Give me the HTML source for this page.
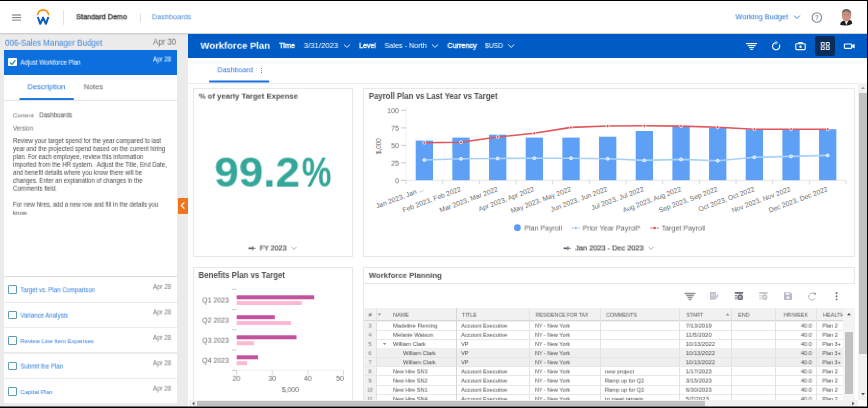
<!DOCTYPE html>
<html><head><meta charset="utf-8"><title>Workforce Plan</title>
<style>
html,body{margin:0;padding:0;}
body{width:868px;height:408px;position:relative;overflow:hidden;background:#fff;font-family:"Liberation Sans",sans-serif;}
div,span,svg{box-sizing:border-box;}
svg{position:absolute;overflow:visible;}
</style></head><body>
<div style="position:absolute;left:0.00px;top:0.00px;width:868.00px;height:408.00px;background:#fff;"></div>
<div style="position:absolute;left:0;top:33px;width:868px;height:3px;background:linear-gradient(#c9c9c9,#e4e4e4 60%,#ebebeb);"></div>
<div style="position:absolute;left:0.00px;top:35.00px;width:188.00px;height:373.00px;background:#ebebeb;"></div>
<svg style="left:0;top:0" width="868" height="408" viewBox="0 0 868 408"><path d="M12.1 15 H21 M12.1 20.1 H21" stroke="#979da5" stroke-width="1.4"/><path d="M12.1 17.55 H21" stroke="#7e848c" stroke-width="1.1"/></svg>
<div style="position:absolute;left:63.30px;top:9.50px;width:1.00px;height:15.50px;background:#e2e2e2;"></div>
<div style="position:absolute;left:139.60px;top:13.50px;width:1.00px;height:8.00px;background:#dcdcdc;"></div>
<svg style="left:0;top:0" width="868" height="408" viewBox="0 0 868 408"><path d="M37.6 14.6 A5.6 5.6 0 0 1 48.6 14.6" fill="none" stroke="#f38b00" stroke-width="1.5" stroke-linecap="round"/><path d="M37.8 17 L40.3 23.8 L43.1 17.6 L45.9 23.8 L48.4 17" fill="none" stroke="#0b5cbf" stroke-width="2" stroke-linejoin="round" stroke-linecap="butt"/></svg>
<svg style="left:0;top:0" width="868" height="408" viewBox="0 0 868 408"><path d="M794 15.6 L796.9 18.5 L799.8 15.6" fill="none" stroke="#3b82d9" stroke-width="1"/><circle cx="816.9" cy="17.5" r="4.7" fill="none" stroke="#7b8794" stroke-width="1.1"/></svg>
<svg style="left:0;top:0" width="868" height="408" viewBox="0 0 868 408"><path d="M839.9 24.6 Q840.6 21.6 843.6 20.6 L846.3 22 L849.8 19.8 Q852.4 21 852.3 23.4 Q849.5 25.8 846 25.5 Q842.5 25.8 839.9 24.6 Z" fill="#1e1e22"/><path d="M845 21.2 L846.3 25.2 L848.2 20.8 Z" fill="#f4f4f4"/><ellipse cx="846.5" cy="15.4" rx="4.7" ry="6.2" fill="#c9917f"/><ellipse cx="846.3" cy="18.6" rx="2.6" ry="1.6" fill="#d29a8c"/><ellipse cx="844.8" cy="14.7" rx="0.9" ry="0.45" fill="#5a4038" opacity="0.55"/><ellipse cx="848.3" cy="14.7" rx="0.9" ry="0.45" fill="#5a4038" opacity="0.55"/><path d="M845.2 18.7 Q846.6 19.4 848 18.7" stroke="#a3605a" stroke-width="0.5" fill="none"/><path d="M841.9 14 Q841.6 9 846.6 8.9 Q851.6 9.2 851.3 15 Q850.6 11.6 846.6 11.2 Q843 11.3 841.9 14 Z" fill="#6e6660"/></svg>
<div style="position:absolute;left:3.80px;top:50.20px;width:173.40px;height:24.40px;background:#0b70de;"></div>
<div style="position:absolute;left:8.20px;top:58.20px;width:8.80px;height:8.10px;background:#fff;border-radius:1px;"></div>
<svg style="left:0;top:0" width="868" height="408" viewBox="0 0 868 408"><path d="M10 62.3 L12 64.4 L15.4 60.2" fill="none" stroke="#1f86a8" stroke-width="1.2"/></svg>
<div style="position:absolute;left:3.80px;top:74.60px;width:173.40px;height:201.60px;background:#fff;box-shadow:0 0.5px 1px rgba(0,0,0,0.08);"></div>
<div style="position:absolute;left:3.80px;top:100.00px;width:173.40px;height:0.80px;background:#e6e6e6;"></div>
<div style="position:absolute;left:178.00px;top:197.60px;width:9.50px;height:16.00px;background:#f0741c;border-radius:0.8px;"></div>
<svg style="left:0;top:0" width="868" height="408" viewBox="0 0 868 408"><path d="M184.4 202.4 L181.3 205.5 L184.4 208.6" fill="none" stroke="#fff" stroke-width="1.15"/></svg>
<div style="position:absolute;left:3.80px;top:277.20px;width:173.40px;height:24.40px;background:#fff;"></div>
<div style="position:absolute;left:8.2px;top:285.30px;width:8.8px;height:8.6px;border:1px solid #5d9cb8;border-radius:1px;background:#fff"></div>
<div style="position:absolute;left:3.80px;top:302.65px;width:173.40px;height:24.40px;background:#fff;"></div>
<div style="position:absolute;left:8.2px;top:310.75px;width:8.8px;height:8.6px;border:1px solid #5d9cb8;border-radius:1px;background:#fff"></div>
<div style="position:absolute;left:3.80px;top:328.10px;width:173.40px;height:24.40px;background:#fff;"></div>
<div style="position:absolute;left:8.2px;top:336.20px;width:8.8px;height:8.6px;border:1px solid #5d9cb8;border-radius:1px;background:#fff"></div>
<div style="position:absolute;left:3.80px;top:353.55px;width:173.40px;height:24.40px;background:#fff;"></div>
<div style="position:absolute;left:8.2px;top:361.65px;width:8.8px;height:8.6px;border:1px solid #5d9cb8;border-radius:1px;background:#fff"></div>
<div style="position:absolute;left:3.80px;top:379.00px;width:173.40px;height:24.40px;background:#fff;"></div>
<div style="position:absolute;left:8.2px;top:387.10px;width:8.8px;height:8.6px;border:1px solid #5d9cb8;border-radius:1px;background:#fff"></div>
<div style="position:absolute;left:188.00px;top:33.80px;width:679.00px;height:23.80px;background:#005cc5;"></div>
<svg style="left:0;top:0" width="868" height="408" viewBox="0 0 868 408"><path d="M343.9 44.5 L346.9 47.4 L349.9 44.5" fill="none" stroke="#fff" stroke-width="0.9"/><path d="M432.0 44.5 L435.0 47.4 L438.0 44.5" fill="none" stroke="#fff" stroke-width="0.9"/><path d="M508.2 44.5 L511.2 47.4 L514.2 44.5" fill="none" stroke="#fff" stroke-width="0.9"/></svg>
<div style="position:absolute;left:815.20px;top:35.90px;width:19.60px;height:19.80px;background:#0b2d5c;border-radius:2px;"></div>
<svg style="left:0;top:0" width="868" height="408" viewBox="0 0 868 408"><g fill="none" stroke="#fff" stroke-width="1.1"><path d="M746.10 43.60 H757.10"/><path d="M747.60 45.60 H755.60"/><path d="M749.10 47.60 H754.10"/><path d="M750.40 49.50 H752.80"/><path d="M776.1 42.6 A3.6 3.6 0 1 0 779.3 44.5" /><path d="M775.6 41 L777.6 42.7 L775.6 44.4" stroke-width="0.8"/><rect x="795.8" y="43.8" width="9.4" height="5.8" rx="0.8"/><path d="M798.4 43.6 L799 42.6 H802 L802.6 43.6"/><circle cx="800.5" cy="46.8" r="1.2" fill="#fff" stroke="none"/><rect x="821.2" y="42.6" width="3" height="2.6" stroke-width="0.9"/><rect x="821.2" y="46.9" width="3" height="2.6" stroke-width="0.9"/><rect x="826.2" y="42.6" width="3" height="2.6" stroke-width="0.9"/><rect x="826.2" y="46.9" width="3" height="2.6" stroke-width="0.9"/><rect x="844.4" y="44" width="7.2" height="4.4" rx="0.6"/><path d="M851.8 45.6 L854.4 44.3 V48.1 L851.8 46.8" fill="#fff" stroke-width="0.5"/></g></svg>
<div style="position:absolute;left:260.80px;top:67.60px;width:1.10px;height:1.10px;background:#2274dc;border-radius:1px;"></div>
<div style="position:absolute;left:260.80px;top:69.80px;width:1.10px;height:1.10px;background:#2274dc;border-radius:1px;"></div>
<div style="position:absolute;left:260.80px;top:72.00px;width:1.10px;height:1.10px;background:#2274dc;border-radius:1px;"></div>
<svg style="left:0;top:0" width="868" height="408" viewBox="0 0 868 408"><rect x="209.2" y="80.5" width="60" height="2" fill="#1673e0"/><rect x="19.5" y="98.1" width="54.3" height="1.9" fill="#1673e0"/></svg>
<div style="position:absolute;left:188.00px;top:82.60px;width:670.30px;height:0.80px;background:#ececec;"></div>
<div style="position:absolute;left:192.80px;top:88.00px;width:160.20px;height:168.80px;border:1px solid #e5e8ed;background:#fff"></div>
<div style="position:absolute;left:363.00px;top:88.00px;width:492.00px;height:168.80px;border:1px solid #e5e8ed;background:#fff"></div>
<div style="position:absolute;left:192.80px;top:267.20px;width:160.20px;height:142.80px;border:1px solid #e5e8ed;background:#fff"></div>
<div style="position:absolute;left:363.00px;top:267.20px;width:492.00px;height:16.60px;border:1px solid #e5e8ed;background:#fff"></div>
<div style="position:absolute;left:363.00px;top:283.00px;width:1.00px;height:117.40px;background:#e5e8ed;"></div>
<svg style="left:0;top:0" width="868" height="408" viewBox="0 0 868 408"><g fill="none" stroke="#667" stroke-width="0.8"><path d="M248.5 248.3 H252.1" stroke-width="1.7" stroke="#5a6270"/><path d="M252.8 246.3 V250.3" stroke-width="1.1" stroke="#5a6270"/><path d="M252.8 248.3 H255.7" stroke-width="0.8" stroke="#5a6270"/><path d="M563.6 248.3 H567.2" stroke-width="1.7" stroke="#5a6270"/><path d="M567.9 246.3 V250.3" stroke-width="1.1" stroke="#5a6270"/><path d="M567.9 248.3 H570.8" stroke-width="0.8" stroke="#5a6270"/><path d="M291.6 247 L294.0 249.4 L296.4 247" stroke="#8a94a0"/><path d="M648.6 247 L651.0 249.4 L653.4 247" stroke="#8a94a0"/></g></svg>
<svg style="left:0;top:0" width="868" height="408" viewBox="0 0 868 408"><g><path d="M406 107 V180.4" fill="none" stroke="#eeeeee" stroke-width="0.8"/><path d="M406 180.4 H846" fill="none" stroke="#e3e3e3" stroke-width="0.8"/><path d="M401 180.40 H406" stroke="#bdbdbd" stroke-width="0.8"/><path d="M401 162.90 H406" stroke="#bdbdbd" stroke-width="0.8"/><path d="M401 145.40 H406" stroke="#bdbdbd" stroke-width="0.8"/><path d="M401 127.90 H406" stroke="#bdbdbd" stroke-width="0.8"/><path d="M401 110.40 H406" stroke="#bdbdbd" stroke-width="0.8"/><path d="M406.00 180.4 V184.4" stroke="#cfcfcf" stroke-width="0.8"/><path d="M442.67 180.4 V184.4" stroke="#cfcfcf" stroke-width="0.8"/><path d="M479.34 180.4 V184.4" stroke="#cfcfcf" stroke-width="0.8"/><path d="M516.01 180.4 V184.4" stroke="#cfcfcf" stroke-width="0.8"/><path d="M552.68 180.4 V184.4" stroke="#cfcfcf" stroke-width="0.8"/><path d="M589.35 180.4 V184.4" stroke="#cfcfcf" stroke-width="0.8"/><path d="M626.02 180.4 V184.4" stroke="#cfcfcf" stroke-width="0.8"/><path d="M662.69 180.4 V184.4" stroke="#cfcfcf" stroke-width="0.8"/><path d="M699.36 180.4 V184.4" stroke="#cfcfcf" stroke-width="0.8"/><path d="M736.03 180.4 V184.4" stroke="#cfcfcf" stroke-width="0.8"/><path d="M772.70 180.4 V184.4" stroke="#cfcfcf" stroke-width="0.8"/><path d="M809.37 180.4 V184.4" stroke="#cfcfcf" stroke-width="0.8"/><path d="M846.04 180.4 V184.4" stroke="#cfcfcf" stroke-width="0.8"/><rect x="415.69" y="140.60" width="17.3" height="39.60" fill="#5da0f6"/><rect x="452.36" y="137.60" width="17.3" height="42.60" fill="#5da0f6"/><rect x="489.03" y="134.70" width="17.3" height="45.50" fill="#5da0f6"/><rect x="525.70" y="137.60" width="17.3" height="42.60" fill="#5da0f6"/><rect x="562.37" y="137.60" width="17.3" height="42.60" fill="#5da0f6"/><rect x="599.03" y="136.70" width="17.3" height="43.50" fill="#5da0f6"/><rect x="635.71" y="131.00" width="17.3" height="49.20" fill="#5da0f6"/><rect x="672.38" y="126.40" width="17.3" height="53.80" fill="#5da0f6"/><rect x="709.04" y="127.70" width="17.3" height="52.50" fill="#5da0f6"/><rect x="745.72" y="129.50" width="17.3" height="50.70" fill="#5da0f6"/><rect x="782.39" y="129.50" width="17.3" height="50.70" fill="#5da0f6"/><rect x="819.06" y="129.20" width="17.3" height="51.00" fill="#5da0f6"/><polyline points="424.33,160.00 461.00,158.80 497.68,158.50 534.35,158.20 571.01,158.20 607.68,158.80 644.36,160.40 681.03,159.40 717.69,160.70 754.37,157.30 791.04,156.40 827.71,155.40" fill="none" stroke="#a9d0fb" stroke-width="1.6"/><circle cx="424.33" cy="160.00" r="1.5" fill="#b9d8fd" stroke="#fff" stroke-width="0.8"/><circle cx="461.00" cy="158.80" r="1.5" fill="#b9d8fd" stroke="#fff" stroke-width="0.8"/><circle cx="497.68" cy="158.50" r="1.5" fill="#b9d8fd" stroke="#fff" stroke-width="0.8"/><circle cx="534.35" cy="158.20" r="1.5" fill="#b9d8fd" stroke="#fff" stroke-width="0.8"/><circle cx="571.01" cy="158.20" r="1.5" fill="#b9d8fd" stroke="#fff" stroke-width="0.8"/><circle cx="607.68" cy="158.80" r="1.5" fill="#b9d8fd" stroke="#fff" stroke-width="0.8"/><circle cx="644.36" cy="160.40" r="1.5" fill="#b9d8fd" stroke="#fff" stroke-width="0.8"/><circle cx="681.03" cy="159.40" r="1.5" fill="#b9d8fd" stroke="#fff" stroke-width="0.8"/><circle cx="717.69" cy="160.70" r="1.5" fill="#b9d8fd" stroke="#fff" stroke-width="0.8"/><circle cx="754.37" cy="157.30" r="1.5" fill="#b9d8fd" stroke="#fff" stroke-width="0.8"/><circle cx="791.04" cy="156.40" r="1.5" fill="#b9d8fd" stroke="#fff" stroke-width="0.8"/><circle cx="827.71" cy="155.40" r="1.5" fill="#b9d8fd" stroke="#fff" stroke-width="0.8"/><polyline points="424.33,142.70 461.00,142.20 497.68,137.00 534.35,133.20 571.01,127.40 607.68,126.00 644.36,125.80 681.03,126.10 717.69,127.30 754.37,129.20 791.04,129.20 827.71,129.20" fill="none" stroke="#e0555a" stroke-width="1.6" stroke-linejoin="round"/><circle cx="424.33" cy="142.70" r="1.5" fill="#e04a50" stroke="#fff" stroke-width="0.75"/><circle cx="461.00" cy="142.20" r="1.5" fill="#e04a50" stroke="#fff" stroke-width="0.75"/><circle cx="497.68" cy="137.00" r="1.5" fill="#e04a50" stroke="#fff" stroke-width="0.75"/><circle cx="534.35" cy="133.20" r="1.5" fill="#e04a50" stroke="#fff" stroke-width="0.75"/><circle cx="571.01" cy="127.40" r="1.5" fill="#e04a50" stroke="#fff" stroke-width="0.75"/><circle cx="607.68" cy="126.00" r="1.5" fill="#e04a50" stroke="#fff" stroke-width="0.75"/><circle cx="644.36" cy="125.80" r="1.5" fill="#e04a50" stroke="#fff" stroke-width="0.75"/><circle cx="681.03" cy="126.10" r="1.5" fill="#e04a50" stroke="#fff" stroke-width="0.75"/><circle cx="717.69" cy="127.30" r="1.5" fill="#e04a50" stroke="#fff" stroke-width="0.75"/><circle cx="754.37" cy="129.20" r="1.5" fill="#e04a50" stroke="#fff" stroke-width="0.75"/><circle cx="791.04" cy="129.20" r="1.5" fill="#e04a50" stroke="#fff" stroke-width="0.75"/><circle cx="827.71" cy="129.20" r="1.5" fill="#e04a50" stroke="#fff" stroke-width="0.75"/><circle cx="517.4" cy="227.7" r="3.4" fill="#5b9df5"/><path d="M571.8 228 H579.8" stroke="#8fc2fb" stroke-width="0.9" stroke-dasharray="2.2 0.8"/><circle cx="575.8" cy="228" r="1.2" fill="#8fc2fb"/><path d="M650.3 228 H659" stroke="#e2555b" stroke-width="0.9" stroke-dasharray="2.4 0.8"/><circle cx="654.6" cy="228" r="1.25" fill="#e2555b"/></g></svg>
<span style="position:absolute;left:379px;top:145.5px;width:0;height:0;"><span style="position:absolute;transform:translate(-50%,-50%) rotate(-90deg);font-size:6.3px;color:#666;white-space:nowrap;line-height:8px;">$,000</span></span>
<span style="position:absolute;left:424.03px;top:188.40px;width:0;height:0;"><span style="position:absolute;right:0;top:-3.8px;transform-origin:100% 50%;transform:rotate(-20.5deg);font-size:6.85px;color:#6e6e6e;white-space:nowrap;line-height:8px;">Jan 2023, Jan ...</span></span>
<span style="position:absolute;left:460.70px;top:188.40px;width:0;height:0;"><span style="position:absolute;right:0;top:-3.8px;transform-origin:100% 50%;transform:rotate(-20.5deg);font-size:6.85px;color:#6e6e6e;white-space:nowrap;line-height:8px;">Feb 2023, Feb 2022</span></span>
<span style="position:absolute;left:497.38px;top:188.40px;width:0;height:0;"><span style="position:absolute;right:0;top:-3.8px;transform-origin:100% 50%;transform:rotate(-20.5deg);font-size:6.85px;color:#6e6e6e;white-space:nowrap;line-height:8px;">Mar 2023, Mar 2022</span></span>
<span style="position:absolute;left:534.05px;top:188.40px;width:0;height:0;"><span style="position:absolute;right:0;top:-3.8px;transform-origin:100% 50%;transform:rotate(-20.5deg);font-size:6.85px;color:#6e6e6e;white-space:nowrap;line-height:8px;">Apr 2023, Apr 2022</span></span>
<span style="position:absolute;left:570.72px;top:188.40px;width:0;height:0;"><span style="position:absolute;right:0;top:-3.8px;transform-origin:100% 50%;transform:rotate(-20.5deg);font-size:6.85px;color:#6e6e6e;white-space:nowrap;line-height:8px;">May 2023, May 2022</span></span>
<span style="position:absolute;left:607.38px;top:188.40px;width:0;height:0;"><span style="position:absolute;right:0;top:-3.8px;transform-origin:100% 50%;transform:rotate(-20.5deg);font-size:6.85px;color:#6e6e6e;white-space:nowrap;line-height:8px;">Jun 2023, Jun 2022</span></span>
<span style="position:absolute;left:644.06px;top:188.40px;width:0;height:0;"><span style="position:absolute;right:0;top:-3.8px;transform-origin:100% 50%;transform:rotate(-20.5deg);font-size:6.85px;color:#6e6e6e;white-space:nowrap;line-height:8px;">Jul 2023, Jul 2022</span></span>
<span style="position:absolute;left:680.73px;top:188.40px;width:0;height:0;"><span style="position:absolute;right:0;top:-3.8px;transform-origin:100% 50%;transform:rotate(-20.5deg);font-size:6.85px;color:#6e6e6e;white-space:nowrap;line-height:8px;">Aug 2023, Aug 2022</span></span>
<span style="position:absolute;left:717.39px;top:188.40px;width:0;height:0;"><span style="position:absolute;right:0;top:-3.8px;transform-origin:100% 50%;transform:rotate(-20.5deg);font-size:6.85px;color:#6e6e6e;white-space:nowrap;line-height:8px;">Sep 2023, Sep 2022</span></span>
<span style="position:absolute;left:754.07px;top:188.40px;width:0;height:0;"><span style="position:absolute;right:0;top:-3.8px;transform-origin:100% 50%;transform:rotate(-20.5deg);font-size:6.85px;color:#6e6e6e;white-space:nowrap;line-height:8px;">Oct 2023, Oct 2022</span></span>
<span style="position:absolute;left:790.74px;top:188.40px;width:0;height:0;"><span style="position:absolute;right:0;top:-3.8px;transform-origin:100% 50%;transform:rotate(-20.5deg);font-size:6.85px;color:#6e6e6e;white-space:nowrap;line-height:8px;">Nov 2023, Nov 2022</span></span>
<span style="position:absolute;left:827.41px;top:188.40px;width:0;height:0;"><span style="position:absolute;right:0;top:-3.8px;transform-origin:100% 50%;transform:rotate(-20.5deg);font-size:6.85px;color:#6e6e6e;white-space:nowrap;line-height:8px;">Dec 2023, Dec 2022</span></span>
<svg style="left:0;top:0" width="868" height="408" viewBox="0 0 868 408"><g><path d="M231.8 289.30 H236.4" stroke="#bdbdbd" stroke-width="0.8"/><path d="M231.8 309.55 H236.4" stroke="#bdbdbd" stroke-width="0.8"/><path d="M231.8 329.80 H236.4" stroke="#bdbdbd" stroke-width="0.8"/><path d="M231.8 350.05 H236.4" stroke="#bdbdbd" stroke-width="0.8"/><path d="M231.8 370.30 H236.4" stroke="#bdbdbd" stroke-width="0.8"/><path d="M236.5 370.3 H343.6" stroke="#ececec" stroke-width="0.8"/><path d="M236.50 370.3 V375" stroke="#cfcfcf" stroke-width="0.8"/><path d="M272.20 370.3 V375" stroke="#cfcfcf" stroke-width="0.8"/><path d="M307.90 370.3 V375" stroke="#cfcfcf" stroke-width="0.8"/><path d="M343.60 370.3 V375" stroke="#cfcfcf" stroke-width="0.8"/><rect x="236.7" y="295.30" width="77.50" height="4" fill="#c2529b"/><rect x="236.7" y="301.10" width="65.10" height="3.9" fill="#ffb8d4"/><rect x="236.7" y="315.20" width="38.10" height="4" fill="#c2529b"/><rect x="236.7" y="321.10" width="54.30" height="3.9" fill="#ffb8d4"/><rect x="236.7" y="335.30" width="59.80" height="4" fill="#c2529b"/><rect x="236.7" y="341.30" width="17.30" height="3.9" fill="#ffb8d4"/><rect x="236.7" y="355.30" width="21.30" height="4" fill="#c2529b"/><rect x="236.7" y="361.30" width="10.50" height="3.9" fill="#ffb8d4"/></g></svg>
<svg style="left:0;top:0" width="868" height="408" viewBox="0 0 868 408"><g fill="none"><path d="M684.60 293.50 H695.40" stroke="#8d9299" stroke-width="1.5"/><path d="M686.20 295.50 H693.80" stroke="#8d9299" stroke-width="1.5"/><path d="M687.50 297.50 H692.50" stroke="#8d9299" stroke-width="1.5"/><path d="M688.70 299.50 H691.30" stroke="#8d9299" stroke-width="1.5"/><rect x="710" y="292" width="5.8" height="7.6" fill="#b9bec6"/><path d="M711 293.9 H714.8 M711 295.6 H714.8 M711 297.3 H713.4" stroke="#fff" stroke-width="0.5"/><path d="M714.4 299.9 L714.9 297.4 L717.4 294.2 L718.8 295.3 L716.4 298.6 Z" fill="#b9bec6" stroke="#fff" stroke-width="0.4"/><rect x="734.8" y="292" width="8.4" height="1.8" fill="#6b7078"/><path d="M734.8 295.5 H737.2 M734.8 297.2 H737.2 M734.8 298.9 H737.2" stroke="#6b7078" stroke-width="0.8"/><circle cx="740.2" cy="297.2" r="2.1" stroke="#6b7078" stroke-width="1.6" fill="#6b7078" fill-opacity="0.45"/><rect x="759.2" y="292" width="8.4" height="1.8" fill="#c3c7cd"/><path d="M759.2 295.5 H761.6 M759.2 297.2 H761.6 M759.2 298.9 H761.6" stroke="#c3c7cd" stroke-width="0.8"/><circle cx="764.6" cy="297.2" r="2.1" stroke="#c3c7cd" stroke-width="1.6" fill="#c3c7cd" fill-opacity="0.45"/><path d="M784 292.2 H790.4 L792 293.8 V299.9 H784 Z" fill="#b9bec6"/><rect x="785.8" y="293.1" width="3.6" height="1.5" fill="#fff"/><rect x="786.6" y="296.6" width="2.6" height="2.1" fill="#fff"/><path d="M814.4 294 A3.4 3.4 0 1 0 815.2 298" stroke="#aab0b8" stroke-width="0.95"/><path d="M813.2 292.6 L815.9 292.9 L815.4 295.4 Z" fill="#8d9299"/></g><circle cx="836.6" cy="293.0" r="0.95" fill="#6b7078"/><circle cx="836.6" cy="296.2" r="0.95" fill="#6b7078"/><circle cx="836.6" cy="299.4" r="0.95" fill="#6b7078"/></svg>
<div style="position:absolute;left:363.50px;top:308.20px;width:479.00px;height:12.20px;background:#f1f1f1;"></div>
<div style="position:absolute;left:363.5px;top:320px;width:479px;height:2px;background:linear-gradient(#cfcfcf,#e4e4e4 55%,rgba(240,240,240,0));"></div>
<div style="position:absolute;left:363.50px;top:320.90px;width:12.80px;height:9.16px;background:#f1f1f1;"></div>
<div style="position:absolute;left:363.50px;top:329.66px;width:479.00px;height:0.80px;background:#e8e8e8;"></div>
<div style="position:absolute;left:363.50px;top:330.06px;width:12.80px;height:9.16px;background:#f1f1f1;"></div>
<div style="position:absolute;left:363.50px;top:338.81px;width:479.00px;height:0.80px;background:#e8e8e8;"></div>
<div style="position:absolute;left:363.50px;top:339.21px;width:12.80px;height:9.16px;background:#f1f1f1;"></div>
<div style="position:absolute;left:363.50px;top:347.97px;width:479.00px;height:0.80px;background:#e8e8e8;"></div>
<div style="position:absolute;left:363.50px;top:348.37px;width:479.00px;height:9.16px;background:#efefef;"></div>
<div style="position:absolute;left:363.50px;top:348.37px;width:12.80px;height:9.16px;background:#f1f1f1;"></div>
<div style="position:absolute;left:363.50px;top:357.13px;width:479.00px;height:0.80px;background:#e8e8e8;"></div>
<div style="position:absolute;left:363.50px;top:357.53px;width:479.00px;height:9.16px;background:#efefef;"></div>
<div style="position:absolute;left:363.50px;top:357.53px;width:12.80px;height:9.16px;background:#f1f1f1;"></div>
<div style="position:absolute;left:363.50px;top:366.28px;width:479.00px;height:0.80px;background:#e8e8e8;"></div>
<div style="position:absolute;left:363.50px;top:366.68px;width:12.80px;height:9.16px;background:#f1f1f1;"></div>
<div style="position:absolute;left:363.50px;top:375.44px;width:479.00px;height:0.80px;background:#e8e8e8;"></div>
<div style="position:absolute;left:363.50px;top:375.84px;width:12.80px;height:9.16px;background:#f1f1f1;"></div>
<div style="position:absolute;left:363.50px;top:384.60px;width:479.00px;height:0.80px;background:#e8e8e8;"></div>
<div style="position:absolute;left:363.50px;top:385.00px;width:12.80px;height:9.16px;background:#f1f1f1;"></div>
<div style="position:absolute;left:363.50px;top:393.76px;width:479.00px;height:0.80px;background:#e8e8e8;"></div>
<div style="position:absolute;left:363.50px;top:394.16px;width:12.80px;height:9.16px;background:#f1f1f1;"></div>
<div style="position:absolute;left:363.50px;top:402.91px;width:479.00px;height:0.80px;background:#e8e8e8;"></div>
<div style="position:absolute;left:375.90px;top:308.20px;width:0.80px;height:91.80px;background:#e3e3e3;"></div>
<div style="position:absolute;left:529.10px;top:308.20px;width:0.80px;height:91.80px;background:#e3e3e3;"></div>
<div style="position:absolute;left:600.10px;top:308.20px;width:0.80px;height:91.80px;background:#e3e3e3;"></div>
<div style="position:absolute;left:679.10px;top:308.20px;width:0.80px;height:91.80px;background:#e3e3e3;"></div>
<div style="position:absolute;left:731.10px;top:308.20px;width:0.80px;height:91.80px;background:#e3e3e3;"></div>
<div style="position:absolute;left:775.40px;top:308.20px;width:0.80px;height:91.80px;background:#e3e3e3;"></div>
<div style="position:absolute;left:815.80px;top:308.20px;width:0.80px;height:91.80px;background:#e3e3e3;"></div>
<div style="position:absolute;left:455.80px;top:308.20px;width:1.20px;height:91.80px;background:#d6d6d6;"></div>
<div style="position:absolute;left:0;top:0;width:868px;height:408px;will-change:transform;">
<span style="position:absolute;left:76px;top:11px;font-size:7.556px;line-height:12px;color:#333;font-weight:400;white-space:pre;transform-origin:0 0;will-change:transform;transform:translate(0.200px,0.250px) rotate(0.01deg) scaleX(0.9615);-webkit-text-stroke:0.3px #333;">Standard Demo</span>
<span style="position:absolute;left:152px;top:11px;font-size:7.574px;line-height:12px;color:#4286dc;font-weight:400;white-space:pre;transform-origin:0 0;will-change:transform;transform:translate(0.000px,0.250px) rotate(0.01deg) scaleX(0.9615);">Dashboards</span>
<span style="position:absolute;left:735px;top:11px;font-size:7.736px;line-height:12px;color:#1f6fd2;font-weight:400;white-space:pre;transform-origin:0 0;will-change:transform;transform:translate(0.500px,0.250px) rotate(0.01deg) scaleX(0.9615);">Working Budget</span>
<span style="position:absolute;left:815px;top:11px;font-size:6.659px;line-height:12px;color:#7b8794;font-weight:700;white-space:pre;transform-origin:0 0;will-change:transform;transform:translate(0.000px,0.850px) rotate(0.01deg) scaleX(0.9615);">?</span>
<span style="position:absolute;left:5px;top:36px;font-size:8.343px;line-height:12px;color:#3f86dc;font-weight:400;white-space:pre;transform-origin:0 0;will-change:transform;transform:translate(0.000px,0.750px) rotate(0.01deg) scaleX(0.9615);">006-Sales Manager Budget</span>
<span style="position:absolute;left:153px;top:36px;font-size:8.202px;line-height:12px;color:#6e6e6e;font-weight:400;white-space:pre;transform-origin:0 0;will-change:transform;transform:translate(0.000px,0.750px) rotate(0.01deg) scaleX(0.9615);">Apr 30</span>
<span style="position:absolute;left:20px;top:56px;font-size:6.356px;line-height:12px;color:#fff;font-weight:400;white-space:pre;transform-origin:0 0;will-change:transform;transform:translate(0.500px,0.750px) rotate(0.01deg) scaleX(0.9615);">Adjust Workforce Plan</span>
<span style="position:absolute;left:153px;top:53px;font-size:6.434px;line-height:12px;color:#fff;font-weight:400;white-space:pre;transform-origin:0 0;will-change:transform;transform:translate(0.000px,0.550px) rotate(0.01deg) scaleX(0.9615);">Apr 28</span>
<span style="position:absolute;left:27px;top:81px;font-size:7.908px;line-height:12px;color:#1a6fd6;font-weight:400;white-space:pre;transform-origin:0 0;will-change:transform;transform:translate(0.500px,0.250px) rotate(0.01deg) scaleX(0.9615);">Description</span>
<span style="position:absolute;left:83px;top:81px;font-size:7.725px;line-height:12px;color:#5a5a5a;font-weight:400;white-space:pre;transform-origin:0 0;will-change:transform;transform:translate(0.800px,0.250px) rotate(0.01deg) scaleX(0.9615);">Notes</span>
<span style="position:absolute;left:13px;top:109px;font-size:6.186px;line-height:12px;color:#6a6a6a;font-weight:400;white-space:pre;transform-origin:0 0;will-change:transform;transform:translate(0.000px,0.350px) rotate(0.01deg) scaleX(0.9615);">Content</span>
<span style="position:absolute;left:39px;top:109px;font-size:6.272px;line-height:12px;color:#444;font-weight:400;white-space:pre;transform-origin:0 0;will-change:transform;transform:translate(0.500px,0.350px) rotate(0.01deg) scaleX(0.9615);">Dashboards</span>
<span style="position:absolute;left:13px;top:122px;font-size:6.297px;line-height:12px;color:#6a6a6a;font-weight:400;white-space:pre;transform-origin:0 0;will-change:transform;transform:translate(0.000px,0.650px) rotate(0.01deg) scaleX(0.9615);">Version</span>
<span style="position:absolute;left:13px;top:135px;font-size:6.341px;line-height:12px;color:#474747;font-weight:400;white-space:pre;transform-origin:0 0;will-change:transform;transform:translate(0.000px,0.050px) rotate(0.01deg) scaleX(0.9615);">Review your target spend for the year compared to last</span>
<span style="position:absolute;left:13px;top:143px;font-size:6.316px;line-height:12px;color:#474747;font-weight:400;white-space:pre;transform-origin:0 0;will-change:transform;transform:translate(0.000px,0.050px) rotate(0.01deg) scaleX(0.9615);">year and the projected spend based on the current hiring</span>
<span style="position:absolute;left:13px;top:151px;font-size:6.312px;line-height:12px;color:#474747;font-weight:400;white-space:pre;transform-origin:0 0;will-change:transform;transform:translate(0.000px,0.050px) rotate(0.01deg) scaleX(0.9615);">plan. For each employee, review this information</span>
<span style="position:absolute;left:13px;top:158px;font-size:6.324px;line-height:12px;color:#474747;font-weight:400;white-space:pre;transform-origin:0 0;will-change:transform;transform:translate(0.000px,0.850px) rotate(0.01deg) scaleX(0.9615);">imported from the HR system.  Adjust the Title, End Date,</span>
<span style="position:absolute;left:13px;top:166px;font-size:6.334px;line-height:12px;color:#474747;font-weight:400;white-space:pre;transform-origin:0 0;will-change:transform;transform:translate(0.000px,0.850px) rotate(0.01deg) scaleX(0.9615);">and benefit details where you know there will be</span>
<span style="position:absolute;left:13px;top:174px;font-size:6.303px;line-height:12px;color:#474747;font-weight:400;white-space:pre;transform-origin:0 0;will-change:transform;transform:translate(0.000px,0.850px) rotate(0.01deg) scaleX(0.9615);">changes. Enter an explanation of changes in the</span>
<span style="position:absolute;left:13px;top:182px;font-size:6.350px;line-height:12px;color:#474747;font-weight:400;white-space:pre;transform-origin:0 0;will-change:transform;transform:translate(0.000px,0.750px) rotate(0.01deg) scaleX(0.9615);">Comments field.</span>
<span style="position:absolute;left:13px;top:198px;font-size:6.296px;line-height:12px;color:#474747;font-weight:400;white-space:pre;transform-origin:0 0;will-change:transform;transform:translate(0.000px,0.750px) rotate(0.01deg) scaleX(0.9615);">For new hires, add a new row and fill in the details you</span>
<span style="position:absolute;left:13px;top:206px;font-size:6.106px;line-height:12px;color:#474747;font-weight:400;white-space:pre;transform-origin:0 0;will-change:transform;transform:translate(0.000px,0.750px) rotate(0.01deg) scaleX(0.9615);">know.</span>
<span style="position:absolute;left:20px;top:284px;font-size:6.321px;line-height:12px;color:#2f7bd9;font-weight:400;white-space:pre;transform-origin:0 0;will-change:transform;transform:translate(0.500px,0.250px) rotate(0.01deg) scaleX(0.9615);">Target vs. Plan Comparison</span>
<span style="position:absolute;left:153px;top:280px;font-size:6.434px;line-height:12px;color:#777;font-weight:400;white-space:pre;transform-origin:0 0;will-change:transform;transform:translate(0.000px,0.950px) rotate(0.01deg) scaleX(0.9615);">Apr 28</span>
<span style="position:absolute;left:20px;top:309px;font-size:6.322px;line-height:12px;color:#2f7bd9;font-weight:400;white-space:pre;transform-origin:0 0;will-change:transform;transform:translate(0.500px,0.700px) rotate(0.01deg) scaleX(0.9615);">Variance Analysis</span>
<span style="position:absolute;left:153px;top:306px;font-size:6.434px;line-height:12px;color:#777;font-weight:400;white-space:pre;transform-origin:0 0;will-change:transform;transform:translate(0.000px,0.400px) rotate(0.01deg) scaleX(0.9615);">Apr 28</span>
<span style="position:absolute;left:20px;top:335px;font-size:6.182px;line-height:12px;color:#2f7bd9;font-weight:400;white-space:pre;transform-origin:0 0;will-change:transform;transform:translate(0.500px,0.150px) rotate(0.01deg) scaleX(0.9615);">Review Line Item Expenses</span>
<span style="position:absolute;left:153px;top:331px;font-size:6.434px;line-height:12px;color:#777;font-weight:400;white-space:pre;transform-origin:0 0;will-change:transform;transform:translate(0.000px,0.850px) rotate(0.01deg) scaleX(0.9615);">Apr 28</span>
<span style="position:absolute;left:20px;top:360px;font-size:6.275px;line-height:12px;color:#2f7bd9;font-weight:400;white-space:pre;transform-origin:0 0;will-change:transform;transform:translate(0.500px,0.600px) rotate(0.01deg) scaleX(0.9615);">Submit the Plan</span>
<span style="position:absolute;left:153px;top:357px;font-size:6.434px;line-height:12px;color:#777;font-weight:400;white-space:pre;transform-origin:0 0;will-change:transform;transform:translate(0.000px,0.300px) rotate(0.01deg) scaleX(0.9615);">Apr 28</span>
<span style="position:absolute;left:20px;top:386px;font-size:6.200px;line-height:12px;color:#2f7bd9;font-weight:400;white-space:pre;transform-origin:0 0;will-change:transform;transform:translate(0.500px,0.050px) rotate(0.01deg) scaleX(0.9615);">Capital Plan</span>
<span style="position:absolute;left:153px;top:382px;font-size:6.434px;line-height:12px;color:#777;font-weight:400;white-space:pre;transform-origin:0 0;will-change:transform;transform:translate(0.000px,0.750px) rotate(0.01deg) scaleX(0.9615);">Apr 28</span>
<span style="position:absolute;left:200px;top:39px;font-size:9.885px;line-height:12px;color:#fff;font-weight:700;white-space:pre;transform-origin:0 0;will-change:transform;transform:translate(0.500px,0.750px) rotate(0.01deg) scaleX(0.9615);">Workforce Plan</span>
<span style="position:absolute;left:279px;top:39px;font-size:7.521px;line-height:12px;color:#fff;font-weight:400;white-space:pre;transform-origin:0 0;will-change:transform;transform:translate(0.200px,0.950px) rotate(0.01deg) scaleX(0.9615);-webkit-text-stroke:0.35px #fff;">Time</span>
<span style="position:absolute;left:303px;top:39px;font-size:8.057px;line-height:12px;color:#fff;font-weight:400;white-space:pre;transform-origin:0 0;will-change:transform;transform:translate(0.800px,0.950px) rotate(0.01deg) scaleX(0.9615);">3/31/2023</span>
<span style="position:absolute;left:359px;top:39px;font-size:7.231px;line-height:12px;color:#fff;font-weight:400;white-space:pre;transform-origin:0 0;will-change:transform;transform:translate(0.200px,0.950px) rotate(0.01deg) scaleX(0.9615);-webkit-text-stroke:0.35px #fff;">Level</span>
<span style="position:absolute;left:384px;top:39px;font-size:7.548px;line-height:12px;color:#fff;font-weight:400;white-space:pre;transform-origin:0 0;will-change:transform;transform:translate(0.500px,0.950px) rotate(0.01deg) scaleX(0.9615);">Sales - North</span>
<span style="position:absolute;left:447px;top:39px;font-size:7.524px;line-height:12px;color:#fff;font-weight:400;white-space:pre;transform-origin:0 0;will-change:transform;transform:translate(0.500px,0.950px) rotate(0.01deg) scaleX(0.9615);-webkit-text-stroke:0.35px #fff;">Currency</span>
<span style="position:absolute;left:485px;top:39px;font-size:7.027px;line-height:12px;color:#fff;font-weight:400;white-space:pre;transform-origin:0 0;will-change:transform;transform:translate(0.000px,0.950px) rotate(0.01deg) scaleX(0.9615);">$USD</span>
<span style="position:absolute;left:217px;top:64px;font-size:7.561px;line-height:12px;color:#2274dc;font-weight:400;white-space:pre;transform-origin:0 0;will-change:transform;transform:translate(0.500px,0.250px) rotate(0.01deg) scaleX(0.9615);">Dashboard</span>
<span style="position:absolute;left:198px;top:90px;font-size:7.991px;line-height:12px;color:#4d4d4d;font-weight:700;white-space:pre;transform-origin:0 0;will-change:transform;transform:translate(0.800px,0.650px) rotate(0.01deg) scaleX(0.9615);">% of yearly Target Expense</span>
<span style="position:absolute;left:368px;top:90px;font-size:8.136px;line-height:12px;color:#4d4d4d;font-weight:700;white-space:pre;transform-origin:0 0;will-change:transform;transform:translate(0.800px,0.950px) rotate(0.01deg) scaleX(0.9615);">Payroll Plan vs Last Year vs Target</span>
<span style="position:absolute;left:198px;top:270px;font-size:8.192px;line-height:12px;color:#4d4d4d;font-weight:700;white-space:pre;transform-origin:0 0;will-change:transform;transform:translate(0.500px,0.050px) rotate(0.01deg) scaleX(0.9615);">Benefits Plan vs Target</span>
<span style="position:absolute;left:368px;top:269px;font-size:8.079px;line-height:12px;color:#4d4d4d;font-weight:700;white-space:pre;transform-origin:0 0;will-change:transform;transform:translate(0.800px,0.850px) rotate(0.01deg) scaleX(0.9615);">Workforce Planning</span>
<span style="position:absolute;left:214px;top:165px;font-size:42.600px;line-height:12px;color:#35a79a;font-weight:700;white-space:pre;transform-origin:0 0;will-change:transform;transform:translate(0.300px,0.650px) rotate(0.01deg) scaleX(1.0325);">99.2</span>
<span style="position:absolute;left:301px;top:165px;font-size:42.600px;line-height:12px;color:#35a79a;font-weight:700;white-space:pre;transform-origin:0 0;will-change:transform;transform:translate(0.800px,0.650px) rotate(0.01deg) scaleX(0.7814);">%</span>
<span style="position:absolute;left:259px;top:242px;font-size:7.389px;line-height:12px;color:#444;font-weight:400;white-space:pre;transform-origin:0 0;will-change:transform;transform:translate(0.800px,0.450px) rotate(0.01deg) scaleX(0.9615);-webkit-text-stroke:0.18px #444;">FY 2023</span>
<span style="position:absolute;left:575px;top:242px;font-size:7.658px;line-height:12px;color:#444;font-weight:400;white-space:pre;transform-origin:0 0;will-change:transform;transform:translate(0.300px,0.450px) rotate(0.01deg) scaleX(0.9615);-webkit-text-stroke:0.18px #444;">Jan 2023 - Dec 2023</span>
<span style="position:absolute;left:395px;top:175px;font-size:7.289px;line-height:12px;color:#666;font-weight:400;white-space:pre;transform-origin:0 0;will-change:transform;transform:translate(0.100px,0.200px) rotate(0.01deg) scaleX(0.9615);">0</span>
<span style="position:absolute;left:391px;top:157px;font-size:7.297px;line-height:12px;color:#666;font-weight:400;white-space:pre;transform-origin:0 0;will-change:transform;transform:translate(0.200px,0.700px) rotate(0.01deg) scaleX(0.9615);">25</span>
<span style="position:absolute;left:391px;top:140px;font-size:7.297px;line-height:12px;color:#666;font-weight:400;white-space:pre;transform-origin:0 0;will-change:transform;transform:translate(0.200px,0.200px) rotate(0.01deg) scaleX(0.9615);">50</span>
<span style="position:absolute;left:391px;top:122px;font-size:7.297px;line-height:12px;color:#666;font-weight:400;white-space:pre;transform-origin:0 0;will-change:transform;transform:translate(0.200px,0.700px) rotate(0.01deg) scaleX(0.9615);">75</span>
<span style="position:absolute;left:387px;top:105px;font-size:7.298px;line-height:12px;color:#666;font-weight:400;white-space:pre;transform-origin:0 0;will-change:transform;transform:translate(0.300px,0.200px) rotate(0.01deg) scaleX(0.9615);">100</span>
<span style="position:absolute;left:524px;top:222px;font-size:7.338px;line-height:12px;color:#666;font-weight:400;white-space:pre;transform-origin:0 0;will-change:transform;transform:translate(0.400px,0.550px) rotate(0.01deg) scaleX(0.9615);">Plan Payroll</span>
<span style="position:absolute;left:582px;top:222px;font-size:7.436px;line-height:12px;color:#666;font-weight:400;white-space:pre;transform-origin:0 0;will-change:transform;transform:translate(0.600px,0.550px) rotate(0.01deg) scaleX(0.9615);">Prior Year Payroll*</span>
<span style="position:absolute;left:661px;top:222px;font-size:7.457px;line-height:12px;color:#666;font-weight:400;white-space:pre;transform-origin:0 0;will-change:transform;transform:translate(0.500px,0.550px) rotate(0.01deg) scaleX(0.9615);">Target Payroll</span>
<span style="position:absolute;left:202px;top:294px;font-size:7.277px;line-height:12px;color:#666;font-weight:400;white-space:pre;transform-origin:0 0;will-change:transform;transform:translate(0.200px,0.550px) rotate(0.01deg) scaleX(0.9615);">Q1 2023</span>
<span style="position:absolute;left:202px;top:314px;font-size:7.277px;line-height:12px;color:#666;font-weight:400;white-space:pre;transform-origin:0 0;will-change:transform;transform:translate(0.200px,0.650px) rotate(0.01deg) scaleX(0.9615);">Q2 2023</span>
<span style="position:absolute;left:202px;top:334px;font-size:7.277px;line-height:12px;color:#666;font-weight:400;white-space:pre;transform-origin:0 0;will-change:transform;transform:translate(0.200px,0.750px) rotate(0.01deg) scaleX(0.9615);">Q3 2023</span>
<span style="position:absolute;left:202px;top:354px;font-size:7.277px;line-height:12px;color:#666;font-weight:400;white-space:pre;transform-origin:0 0;will-change:transform;transform:translate(0.200px,0.850px) rotate(0.01deg) scaleX(0.9615);">Q4 2023</span>
<span style="position:absolute;left:232px;top:372px;font-size:7.297px;line-height:12px;color:#666;font-weight:400;white-space:pre;transform-origin:0 0;will-change:transform;transform:translate(0.600px,0.850px) rotate(0.01deg) scaleX(0.9615);">20</span>
<span style="position:absolute;left:268px;top:372px;font-size:7.297px;line-height:12px;color:#666;font-weight:400;white-space:pre;transform-origin:0 0;will-change:transform;transform:translate(0.400px,0.850px) rotate(0.01deg) scaleX(0.9615);">30</span>
<span style="position:absolute;left:303px;top:372px;font-size:7.297px;line-height:12px;color:#666;font-weight:400;white-space:pre;transform-origin:0 0;will-change:transform;transform:translate(0.900px,0.850px) rotate(0.01deg) scaleX(0.9615);">40</span>
<span style="position:absolute;left:336px;top:372px;font-size:7.297px;line-height:12px;color:#666;font-weight:400;white-space:pre;transform-origin:0 0;will-change:transform;transform:translate(0.200px,0.850px) rotate(0.01deg) scaleX(0.9615);">50</span>
<span style="position:absolute;left:281px;top:384px;font-size:7.150px;line-height:12px;color:#666;font-weight:400;white-space:pre;transform-origin:0 0;will-change:transform;transform:translate(0.800px,0.050px) rotate(0.01deg) scaleX(0.9615);">$,000</span>
<span style="position:absolute;left:368px;top:308px;font-size:5.975px;line-height:12px;color:#555;font-weight:400;white-space:pre;transform-origin:0 0;will-change:transform;transform:translate(0.600px,0.750px) rotate(0.01deg) scaleX(0.9615);">#</span>
<span style="position:absolute;left:393px;top:308px;font-size:5.702px;line-height:12px;color:#555;font-weight:400;white-space:pre;transform-origin:0 0;will-change:transform;transform:translate(0.000px,0.750px) rotate(0.01deg) scaleX(0.9615);">NAME</span>
<span style="position:absolute;left:462px;top:308px;font-size:5.552px;line-height:12px;color:#555;font-weight:400;white-space:pre;transform-origin:0 0;will-change:transform;transform:translate(0.000px,0.750px) rotate(0.01deg) scaleX(0.9615);">TITLE</span>
<span style="position:absolute;left:535px;top:308px;font-size:5.278px;line-height:12px;color:#555;font-weight:400;white-space:pre;transform-origin:0 0;will-change:transform;transform:translate(0.800px,0.750px) rotate(0.01deg) scaleX(0.9615);">RESIDENCE FOR TAX</span>
<span style="position:absolute;left:606px;top:308px;font-size:5.490px;line-height:12px;color:#555;font-weight:400;white-space:pre;transform-origin:0 0;will-change:transform;transform:translate(0.200px,0.750px) rotate(0.01deg) scaleX(0.9615);">COMMENTS</span>
<span style="position:absolute;left:686px;top:308px;font-size:5.409px;line-height:12px;color:#555;font-weight:400;white-space:pre;transform-origin:0 0;will-change:transform;transform:translate(0.500px,0.750px) rotate(0.01deg) scaleX(0.9615);">START</span>
<span style="position:absolute;left:738px;top:308px;font-size:5.567px;line-height:12px;color:#555;font-weight:400;white-space:pre;transform-origin:0 0;will-change:transform;transform:translate(0.200px,0.750px) rotate(0.01deg) scaleX(0.9615);">END</span>
<span style="position:absolute;left:783px;top:308px;font-size:5.353px;line-height:12px;color:#555;font-weight:400;white-space:pre;transform-origin:0 0;will-change:transform;transform:translate(0.800px,0.750px) rotate(0.01deg) scaleX(0.9615);">HR/WEEK</span>
<span style="position:absolute;left:823px;top:308px;font-size:5.643px;line-height:12px;color:#555;font-weight:400;white-space:pre;transform-origin:0 0;will-change:transform;transform:translate(0.200px,0.750px) rotate(0.01deg) scaleX(0.9615);">HEALTH</span>
<span style="position:absolute;left:368px;top:319px;font-size:5.613px;line-height:12px;color:#707070;font-weight:400;white-space:pre;transform-origin:0 0;will-change:transform;transform:translate(0.500px,0.628px) rotate(0.01deg) scaleX(0.9615);">3</span>
<span style="position:absolute;left:393px;top:319px;font-size:5.876px;line-height:12px;color:#464646;font-weight:400;white-space:pre;transform-origin:0 0;will-change:transform;transform:translate(0.000px,0.628px) rotate(0.01deg) scaleX(0.9615);">Madeline Fleming</span>
<span style="position:absolute;left:461px;top:319px;font-size:5.852px;line-height:12px;color:#464646;font-weight:400;white-space:pre;transform-origin:0 0;will-change:transform;transform:translate(0.200px,0.628px) rotate(0.01deg) scaleX(0.9615);">Account Executive</span>
<span style="position:absolute;left:535px;top:319px;font-size:5.624px;line-height:12px;color:#464646;font-weight:400;white-space:pre;transform-origin:0 0;will-change:transform;transform:translate(0.000px,0.628px) rotate(0.01deg) scaleX(0.9615);">NY - New York</span>
<span style="position:absolute;left:685px;top:319px;font-size:6.069px;line-height:12px;color:#464646;font-weight:400;white-space:pre;transform-origin:0 0;will-change:transform;transform:translate(0.800px,0.628px) rotate(0.01deg) scaleX(0.9615);">7/13/2019</span>
<span style="position:absolute;left:800px;top:319px;font-size:5.991px;line-height:12px;color:#464646;font-weight:400;white-space:pre;transform-origin:0 0;will-change:transform;transform:translate(0.800px,0.628px) rotate(0.01deg) scaleX(0.9615);">40.0</span>
<span style="position:absolute;left:822px;top:319px;font-size:5.578px;line-height:12px;color:#464646;font-weight:400;white-space:pre;transform-origin:0 0;will-change:transform;transform:translate(0.500px,0.628px) rotate(0.01deg) scaleX(0.9615);">Plan 2</span>
<span style="position:absolute;left:368px;top:328px;font-size:5.613px;line-height:12px;color:#707070;font-weight:400;white-space:pre;transform-origin:0 0;will-change:transform;transform:translate(0.500px,0.785px) rotate(0.01deg) scaleX(0.9615);">4</span>
<span style="position:absolute;left:393px;top:328px;font-size:5.871px;line-height:12px;color:#464646;font-weight:400;white-space:pre;transform-origin:0 0;will-change:transform;transform:translate(0.000px,0.785px) rotate(0.01deg) scaleX(0.9615);">Melanie Watson</span>
<span style="position:absolute;left:461px;top:328px;font-size:5.852px;line-height:12px;color:#464646;font-weight:400;white-space:pre;transform-origin:0 0;will-change:transform;transform:translate(0.200px,0.785px) rotate(0.01deg) scaleX(0.9615);">Account Executive</span>
<span style="position:absolute;left:535px;top:328px;font-size:5.624px;line-height:12px;color:#464646;font-weight:400;white-space:pre;transform-origin:0 0;will-change:transform;transform:translate(0.000px,0.785px) rotate(0.01deg) scaleX(0.9615);">NY - New York</span>
<span style="position:absolute;left:685px;top:328px;font-size:6.160px;line-height:12px;color:#464646;font-weight:400;white-space:pre;transform-origin:0 0;will-change:transform;transform:translate(0.800px,0.785px) rotate(0.01deg) scaleX(0.9615);">11/5/2020</span>
<span style="position:absolute;left:800px;top:328px;font-size:5.991px;line-height:12px;color:#464646;font-weight:400;white-space:pre;transform-origin:0 0;will-change:transform;transform:translate(0.800px,0.785px) rotate(0.01deg) scaleX(0.9615);">40.0</span>
<span style="position:absolute;left:822px;top:328px;font-size:5.578px;line-height:12px;color:#464646;font-weight:400;white-space:pre;transform-origin:0 0;will-change:transform;transform:translate(0.500px,0.785px) rotate(0.01deg) scaleX(0.9615);">Plan 2</span>
<span style="position:absolute;left:368px;top:337px;font-size:5.613px;line-height:12px;color:#707070;font-weight:400;white-space:pre;transform-origin:0 0;will-change:transform;transform:translate(0.500px,0.942px) rotate(0.01deg) scaleX(0.9615);">5</span>
<span style="position:absolute;left:393px;top:337px;font-size:5.835px;line-height:12px;color:#464646;font-weight:400;white-space:pre;transform-origin:0 0;will-change:transform;transform:translate(0.000px,0.942px) rotate(0.01deg) scaleX(0.9615);">William Clark</span>
<span style="position:absolute;left:461px;top:337px;font-size:5.774px;line-height:12px;color:#464646;font-weight:400;white-space:pre;transform-origin:0 0;will-change:transform;transform:translate(0.200px,0.942px) rotate(0.01deg) scaleX(0.9615);">VP</span>
<span style="position:absolute;left:535px;top:337px;font-size:5.624px;line-height:12px;color:#464646;font-weight:400;white-space:pre;transform-origin:0 0;will-change:transform;transform:translate(0.000px,0.942px) rotate(0.01deg) scaleX(0.9615);">NY - New York</span>
<span style="position:absolute;left:685px;top:337px;font-size:6.052px;line-height:12px;color:#464646;font-weight:400;white-space:pre;transform-origin:0 0;will-change:transform;transform:translate(0.800px,0.942px) rotate(0.01deg) scaleX(0.9615);">10/13/2022</span>
<span style="position:absolute;left:800px;top:337px;font-size:5.991px;line-height:12px;color:#464646;font-weight:400;white-space:pre;transform-origin:0 0;will-change:transform;transform:translate(0.800px,0.942px) rotate(0.01deg) scaleX(0.9615);">40.0</span>
<span style="position:absolute;left:822px;top:337px;font-size:5.541px;line-height:12px;color:#464646;font-weight:400;white-space:pre;transform-origin:0 0;will-change:transform;transform:translate(0.500px,0.942px) rotate(0.01deg) scaleX(0.9615);">Plan 3+</span>
<span style="position:absolute;left:368px;top:347px;font-size:5.613px;line-height:12px;color:#707070;font-weight:400;white-space:pre;transform-origin:0 0;will-change:transform;transform:translate(0.500px,0.099px) rotate(0.01deg) scaleX(0.9615);">6</span>
<span style="position:absolute;left:403px;top:347px;font-size:5.835px;line-height:12px;color:#464646;font-weight:400;white-space:pre;transform-origin:0 0;will-change:transform;transform:translate(0.000px,0.099px) rotate(0.01deg) scaleX(0.9615);">William Clark</span>
<span style="position:absolute;left:461px;top:347px;font-size:5.774px;line-height:12px;color:#464646;font-weight:400;white-space:pre;transform-origin:0 0;will-change:transform;transform:translate(0.200px,0.099px) rotate(0.01deg) scaleX(0.9615);">VP</span>
<span style="position:absolute;left:535px;top:347px;font-size:5.624px;line-height:12px;color:#464646;font-weight:400;white-space:pre;transform-origin:0 0;will-change:transform;transform:translate(0.000px,0.099px) rotate(0.01deg) scaleX(0.9615);">NY - New York</span>
<span style="position:absolute;left:685px;top:347px;font-size:6.052px;line-height:12px;color:#464646;font-weight:400;white-space:pre;transform-origin:0 0;will-change:transform;transform:translate(0.800px,0.099px) rotate(0.01deg) scaleX(0.9615);">10/13/2022</span>
<span style="position:absolute;left:800px;top:347px;font-size:5.991px;line-height:12px;color:#464646;font-weight:400;white-space:pre;transform-origin:0 0;will-change:transform;transform:translate(0.800px,0.099px) rotate(0.01deg) scaleX(0.9615);">40.0</span>
<span style="position:absolute;left:822px;top:347px;font-size:5.541px;line-height:12px;color:#464646;font-weight:400;white-space:pre;transform-origin:0 0;will-change:transform;transform:translate(0.500px,0.099px) rotate(0.01deg) scaleX(0.9615);">Plan 3+</span>
<span style="position:absolute;left:368px;top:356px;font-size:5.613px;line-height:12px;color:#707070;font-weight:400;white-space:pre;transform-origin:0 0;will-change:transform;transform:translate(0.500px,0.256px) rotate(0.01deg) scaleX(0.9615);">7</span>
<span style="position:absolute;left:403px;top:356px;font-size:5.835px;line-height:12px;color:#464646;font-weight:400;white-space:pre;transform-origin:0 0;will-change:transform;transform:translate(0.000px,0.256px) rotate(0.01deg) scaleX(0.9615);">William Clark</span>
<span style="position:absolute;left:461px;top:356px;font-size:5.774px;line-height:12px;color:#464646;font-weight:400;white-space:pre;transform-origin:0 0;will-change:transform;transform:translate(0.200px,0.256px) rotate(0.01deg) scaleX(0.9615);">VP</span>
<span style="position:absolute;left:535px;top:356px;font-size:5.624px;line-height:12px;color:#464646;font-weight:400;white-space:pre;transform-origin:0 0;will-change:transform;transform:translate(0.000px,0.256px) rotate(0.01deg) scaleX(0.9615);">NY - New York</span>
<span style="position:absolute;left:685px;top:356px;font-size:6.052px;line-height:12px;color:#464646;font-weight:400;white-space:pre;transform-origin:0 0;will-change:transform;transform:translate(0.800px,0.256px) rotate(0.01deg) scaleX(0.9615);">10/13/2022</span>
<span style="position:absolute;left:800px;top:356px;font-size:5.991px;line-height:12px;color:#464646;font-weight:400;white-space:pre;transform-origin:0 0;will-change:transform;transform:translate(0.800px,0.256px) rotate(0.01deg) scaleX(0.9615);">40.0</span>
<span style="position:absolute;left:822px;top:356px;font-size:5.541px;line-height:12px;color:#464646;font-weight:400;white-space:pre;transform-origin:0 0;will-change:transform;transform:translate(0.500px,0.256px) rotate(0.01deg) scaleX(0.9615);">Plan 3+</span>
<span style="position:absolute;left:368px;top:365px;font-size:5.613px;line-height:12px;color:#707070;font-weight:400;white-space:pre;transform-origin:0 0;will-change:transform;transform:translate(0.500px,0.413px) rotate(0.01deg) scaleX(0.9615);">8</span>
<span style="position:absolute;left:393px;top:365px;font-size:5.678px;line-height:12px;color:#464646;font-weight:400;white-space:pre;transform-origin:0 0;will-change:transform;transform:translate(0.000px,0.413px) rotate(0.01deg) scaleX(0.9615);">New Hire SN3</span>
<span style="position:absolute;left:461px;top:365px;font-size:5.852px;line-height:12px;color:#464646;font-weight:400;white-space:pre;transform-origin:0 0;will-change:transform;transform:translate(0.200px,0.413px) rotate(0.01deg) scaleX(0.9615);">Account Executive</span>
<span style="position:absolute;left:535px;top:365px;font-size:5.624px;line-height:12px;color:#464646;font-weight:400;white-space:pre;transform-origin:0 0;will-change:transform;transform:translate(0.000px,0.413px) rotate(0.01deg) scaleX(0.9615);">NY - New York</span>
<span style="position:absolute;left:605px;top:365px;font-size:5.883px;line-height:12px;color:#464646;font-weight:400;white-space:pre;transform-origin:0 0;will-change:transform;transform:translate(0.000px,0.413px) rotate(0.01deg) scaleX(0.9615);">new project</span>
<span style="position:absolute;left:685px;top:365px;font-size:6.069px;line-height:12px;color:#464646;font-weight:400;white-space:pre;transform-origin:0 0;will-change:transform;transform:translate(0.800px,0.413px) rotate(0.01deg) scaleX(0.9615);">1/17/2023</span>
<span style="position:absolute;left:800px;top:365px;font-size:5.991px;line-height:12px;color:#464646;font-weight:400;white-space:pre;transform-origin:0 0;will-change:transform;transform:translate(0.800px,0.413px) rotate(0.01deg) scaleX(0.9615);">40.0</span>
<span style="position:absolute;left:822px;top:365px;font-size:5.578px;line-height:12px;color:#464646;font-weight:400;white-space:pre;transform-origin:0 0;will-change:transform;transform:translate(0.500px,0.413px) rotate(0.01deg) scaleX(0.9615);">Plan 2</span>
<span style="position:absolute;left:368px;top:374px;font-size:5.613px;line-height:12px;color:#707070;font-weight:400;white-space:pre;transform-origin:0 0;will-change:transform;transform:translate(0.500px,0.570px) rotate(0.01deg) scaleX(0.9615);">9</span>
<span style="position:absolute;left:393px;top:374px;font-size:5.678px;line-height:12px;color:#464646;font-weight:400;white-space:pre;transform-origin:0 0;will-change:transform;transform:translate(0.000px,0.570px) rotate(0.01deg) scaleX(0.9615);">New Hire SN2</span>
<span style="position:absolute;left:461px;top:374px;font-size:5.852px;line-height:12px;color:#464646;font-weight:400;white-space:pre;transform-origin:0 0;will-change:transform;transform:translate(0.200px,0.570px) rotate(0.01deg) scaleX(0.9615);">Account Executive</span>
<span style="position:absolute;left:535px;top:374px;font-size:5.624px;line-height:12px;color:#464646;font-weight:400;white-space:pre;transform-origin:0 0;will-change:transform;transform:translate(0.000px,0.570px) rotate(0.01deg) scaleX(0.9615);">NY - New York</span>
<span style="position:absolute;left:605px;top:374px;font-size:5.716px;line-height:12px;color:#464646;font-weight:400;white-space:pre;transform-origin:0 0;will-change:transform;transform:translate(0.000px,0.570px) rotate(0.01deg) scaleX(0.9615);">Ramp up for Q2</span>
<span style="position:absolute;left:685px;top:374px;font-size:6.069px;line-height:12px;color:#464646;font-weight:400;white-space:pre;transform-origin:0 0;will-change:transform;transform:translate(0.800px,0.570px) rotate(0.01deg) scaleX(0.9615);">3/15/2023</span>
<span style="position:absolute;left:800px;top:374px;font-size:5.991px;line-height:12px;color:#464646;font-weight:400;white-space:pre;transform-origin:0 0;will-change:transform;transform:translate(0.800px,0.570px) rotate(0.01deg) scaleX(0.9615);">40.0</span>
<span style="position:absolute;left:822px;top:374px;font-size:5.578px;line-height:12px;color:#464646;font-weight:400;white-space:pre;transform-origin:0 0;will-change:transform;transform:translate(0.500px,0.570px) rotate(0.01deg) scaleX(0.9615);">Plan 2</span>
<span style="position:absolute;left:367px;top:383px;font-size:5.044px;line-height:12px;color:#707070;font-weight:400;white-space:pre;transform-origin:0 0;will-change:transform;transform:translate(0.300px,0.727px) rotate(0.01deg) scaleX(0.9615);">10</span>
<span style="position:absolute;left:393px;top:383px;font-size:5.678px;line-height:12px;color:#464646;font-weight:400;white-space:pre;transform-origin:0 0;will-change:transform;transform:translate(0.000px,0.727px) rotate(0.01deg) scaleX(0.9615);">New Hire SN1</span>
<span style="position:absolute;left:461px;top:383px;font-size:5.852px;line-height:12px;color:#464646;font-weight:400;white-space:pre;transform-origin:0 0;will-change:transform;transform:translate(0.200px,0.727px) rotate(0.01deg) scaleX(0.9615);">Account Executive</span>
<span style="position:absolute;left:535px;top:383px;font-size:5.624px;line-height:12px;color:#464646;font-weight:400;white-space:pre;transform-origin:0 0;will-change:transform;transform:translate(0.000px,0.727px) rotate(0.01deg) scaleX(0.9615);">NY - New York</span>
<span style="position:absolute;left:605px;top:383px;font-size:5.716px;line-height:12px;color:#464646;font-weight:400;white-space:pre;transform-origin:0 0;will-change:transform;transform:translate(0.000px,0.727px) rotate(0.01deg) scaleX(0.9615);">Ramp up for Q2</span>
<span style="position:absolute;left:685px;top:383px;font-size:6.069px;line-height:12px;color:#464646;font-weight:400;white-space:pre;transform-origin:0 0;will-change:transform;transform:translate(0.800px,0.727px) rotate(0.01deg) scaleX(0.9615);">6/30/2023</span>
<span style="position:absolute;left:800px;top:383px;font-size:5.991px;line-height:12px;color:#464646;font-weight:400;white-space:pre;transform-origin:0 0;will-change:transform;transform:translate(0.800px,0.727px) rotate(0.01deg) scaleX(0.9615);">40.0</span>
<span style="position:absolute;left:822px;top:383px;font-size:5.578px;line-height:12px;color:#464646;font-weight:400;white-space:pre;transform-origin:0 0;will-change:transform;transform:translate(0.500px,0.727px) rotate(0.01deg) scaleX(0.9615);">Plan 2</span>
<span style="position:absolute;left:367px;top:392px;font-size:5.412px;line-height:12px;color:#707070;font-weight:400;white-space:pre;transform-origin:0 0;will-change:transform;transform:translate(0.300px,0.884px) rotate(0.01deg) scaleX(0.9615);">11</span>
<span style="position:absolute;left:393px;top:392px;font-size:5.678px;line-height:12px;color:#464646;font-weight:400;white-space:pre;transform-origin:0 0;will-change:transform;transform:translate(0.000px,0.884px) rotate(0.01deg) scaleX(0.9615);">New Hire SN4</span>
<span style="position:absolute;left:461px;top:392px;font-size:5.852px;line-height:12px;color:#464646;font-weight:400;white-space:pre;transform-origin:0 0;will-change:transform;transform:translate(0.200px,0.884px) rotate(0.01deg) scaleX(0.9615);">Account Executive</span>
<span style="position:absolute;left:535px;top:392px;font-size:5.624px;line-height:12px;color:#464646;font-weight:400;white-space:pre;transform-origin:0 0;will-change:transform;transform:translate(0.000px,0.884px) rotate(0.01deg) scaleX(0.9615);">NY - New York</span>
<span style="position:absolute;left:605px;top:392px;font-size:5.982px;line-height:12px;color:#464646;font-weight:400;white-space:pre;transform-origin:0 0;will-change:transform;transform:translate(0.000px,0.884px) rotate(0.01deg) scaleX(0.9615);">to meet targets</span>
<span style="position:absolute;left:685px;top:392px;font-size:6.153px;line-height:12px;color:#464646;font-weight:400;white-space:pre;transform-origin:0 0;will-change:transform;transform:translate(0.800px,0.884px) rotate(0.01deg) scaleX(0.9615);">5/7/2023</span>
<span style="position:absolute;left:800px;top:392px;font-size:5.991px;line-height:12px;color:#464646;font-weight:400;white-space:pre;transform-origin:0 0;will-change:transform;transform:translate(0.800px,0.884px) rotate(0.01deg) scaleX(0.9615);">40.0</span>
<span style="position:absolute;left:822px;top:392px;font-size:5.578px;line-height:12px;color:#464646;font-weight:400;white-space:pre;transform-origin:0 0;will-change:transform;transform:translate(0.500px,0.884px) rotate(0.01deg) scaleX(0.9615);">Plan 2</span>
<div style="position:absolute;left:842.50px;top:308.20px;width:12.50px;height:92.20px;background:#f4f4f4;"></div>
<div style="position:absolute;left:845.20px;top:331.50px;width:7.50px;height:62.10px;background:#c1c1c1;"></div>
<div style="position:absolute;left:858.30px;top:83.40px;width:8.70px;height:317.00px;background:#f1f1f1;"></div>
<div style="position:absolute;left:859.20px;top:92.50px;width:7.40px;height:261.90px;background:#c1c1c1;"></div>
<div style="position:absolute;left:188.00px;top:400.40px;width:670.30px;height:6.20px;background:#f1f1f1;"></div>
<div style="position:absolute;left:188.00px;top:400.40px;width:0.60px;height:6.20px;background:#fff;"></div>
<div style="position:absolute;left:197.30px;top:401.00px;width:507.70px;height:5.20px;background:#c1c1c1;"></div>
<div style="position:absolute;left:858.30px;top:400.40px;width:8.70px;height:6.20px;background:#fff;"></div>
<svg style="left:0;top:0" width="868" height="408" viewBox="0 0 868 408"><path d="M377.6 313.4 H381.4 L379.5 315.8 Z" fill="#9a9a9a"/><path d="M725.6 315.6 H729.6 L727.6 313.2 Z" fill="#9a9a9a"/><path d="M382.9 342.9 H386.3 L384.6 345.1 Z" fill="#8a8a8a"/><path d="M847 315.2 H851 L849 313 Z" fill="#505050"/><path d="M861 89 H865 L863 86.8 Z" fill="#a3a3a3"/><path d="M861 393 H865 L863 395.2 Z" fill="#505050"/><path d="M194.4 401.6 V405.6 L192.2 403.6 Z" fill="#505050"/><path d="M852.2 401.6 V405.6 L854.4 403.6 Z" fill="#505050"/></svg>
<div style="position:absolute;left:0.00px;top:0.00px;width:868.00px;height:1.00px;background:#000;"></div>
<div style="position:absolute;left:867.00px;top:0.00px;width:1.00px;height:408.00px;background:#000;"></div>
<svg style="left:0;top:0" width="868" height="408" viewBox="0 0 868 408"><rect x="0" y="406.5" width="868" height="1.5" fill="#000"/></svg>
</div>
</body></html>
